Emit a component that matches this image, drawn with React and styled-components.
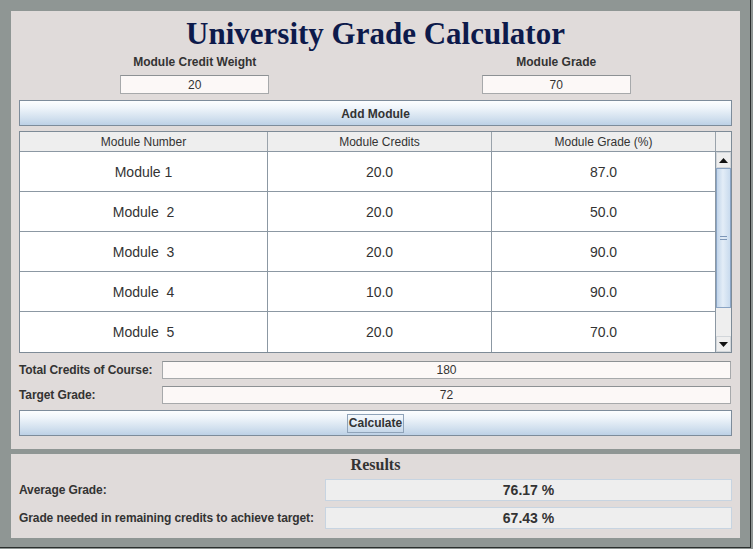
import React from 'react';
import styled, { createGlobalStyle } from 'styled-components';

const GlobalStyle = createGlobalStyle`
  html, body {
    margin: 0;
    padding: 0;
    background: #8f9694;
  }
  * {
    box-sizing: border-box;
  }
`;

const Frame = styled.div`
  width: 751px;
  height: 548px;
  background: #8f9694;
  border-right: 1px solid #2b2f2e;
  border-bottom: 1px solid #2b2f2e;
  padding: 11px 10px 0 11px;
  display: flex;
  flex-direction: column;
  gap: 5px;
  font-family: 'Liberation Sans', Arial, sans-serif;
  color: #333333;
`;

const Panel = styled.div`
  background: #e0dbda;
  padding: ${({ $pad }) => $pad};
  display: flex;
  flex-direction: column;
`;

const Title = styled.h1`
  margin: 0;
  padding-top: 5px;
  height: 41px;
  font-family: 'Liberation Serif', 'Times New Roman', serif;
  font-weight: bold;
  font-size: 31px;
  line-height: 36px;
  color: #0d1a4b;
  text-align: center;
`;

const EntryGrid = styled.div`
  display: grid;
  grid-template-columns: 1fr 1fr;
  margin: 0 -5px;
`;

const EntryColumn = styled.div`
  display: flex;
  flex-direction: column;
  align-items: center;
`;

const FieldLabel = styled.div`
  margin-top: 2px;
  font-size: 12px;
  line-height: 17px;
  font-weight: bold;
  color: #333;
`;

const TextBox = styled.div`
  width: ${({ $w }) => $w || '149px'};
  height: ${({ $h }) => $h || '19px'};
  margin-top: ${({ $mt }) => $mt || '0'};
  background: #fcf8f7;
  border: 1px solid #a7a9ab;
  border-top-color: #8d9194;
  font-size: 12px;
  line-height: ${({ $h }) => ($h ? `calc(${$h} - 1px)` : '18px')};
  text-align: center;
  color: #333;
`;

const Button = styled.div`
  height: 26px;
  margin-top: ${({ $mt }) => $mt};
  padding-top: 1px;
  display: flex;
  align-items: center;
  justify-content: center;
  border: 1px solid #7d8c9b;
  background: linear-gradient(#fdfeff 0%, #eef4fa 30%, #d3e1ef 70%, #bdd1e6 100%);
  font-size: 12px;
  font-weight: bold;
  color: #333;
`;

const FocusText = styled.span`
  padding: 1px 1px 2px;
  border: 1px solid #8fa3b9;
  line-height: 14px;
`;

const Table = styled.div`
  margin-top: 5px;
  border: 1px solid #7e8b97;
  display: flex;
  flex-direction: column;
  background: #ffffff;
`;

const HeaderRow = styled.div`
  display: grid;
  grid-template-columns: 248px 224px 224px 15px;
  height: 20px;
  border-bottom: 1px solid #8c98a3;
  background: #eeeeee;
`;

const HeaderCell = styled.div`
  border-right: ${({ $last }) => ($last ? 'none' : '1px solid #9aa3ab')};
  padding-top: 1px;
  font-size: 12px;
  line-height: 18px;
  text-align: center;
  color: #333;
`;

const TableBody = styled.div`
  display: flex;
`;

const Rows = styled.div`
  display: flex;
  flex-direction: column;
  width: 696px;
`;

const Row = styled.div`
  display: grid;
  grid-template-columns: 248px 224px 224px;
  height: 40px;
  border-bottom: ${({ $last }) => ($last ? 'none' : '1px solid #8c98a3')};
`;

const Cell = styled.div`
  border-right: 1px solid #8c98a3;
  padding-top: 1px;
  font-size: 14px;
  line-height: 38px;
  text-align: center;
  white-space: pre;
  color: #333;
`;

const ScrollBar = styled.div`
  width: 15px;
  display: flex;
  flex-direction: column;
  background: #eeeeee;
`;

const ArrowButton = styled.div`
  height: 16px;
  display: flex;
  align-items: center;
  justify-content: center;
  background: #eeeeee;
  border: 1px solid #d2d6da;
`;

const Thumb = styled.div`
  height: 140px;
  display: flex;
  align-items: center;
  justify-content: center;
  border: 1px solid #8aa4c4;
  background: linear-gradient(90deg, #c2d5ea 0%, #e3edf7 45%, #c9dbee 100%);
`;

const Grip = styled.div`
  width: 7px;
  height: 4px;
  border-top: 1px solid #7d97b8;
  border-bottom: 1px solid #7d97b8;
`;

const Track = styled.div`
  flex: 1;
  background: #eeeeee;
`;

const FormRow = styled.div`
  display: flex;
  align-items: center;
  margin-top: ${({ $mt }) => $mt};
`;

const FormLabel = styled.div`
  width: ${({ $w }) => $w};
  font-size: 12px;
  font-weight: bold;
  letter-spacing: -0.1px;
  color: #333;
`;

const ResultsTitle = styled.div`
  height: 22px;
  font-family: 'Liberation Serif', 'Times New Roman', serif;
  font-weight: bold;
  font-size: 16px;
  line-height: 22px;
  text-align: center;
  color: #333;
`;

const ResultBox = styled.div`
  flex: 1;
  height: 22px;
  background: #eeeeee;
  border: 1px solid #c7d4e1;
  font-size: 14px;
  font-weight: bold;
  line-height: 20px;
  text-align: center;
  color: #333;
`;

const Arrow = ({ up }) => (
  <svg width="9" height="5" viewBox="0 0 9 5">
    <path d={up ? 'M0 5 L4.5 0 L9 5 Z' : 'M0 0 L4.5 5 L9 0 Z'} fill="#111" />
  </svg>
);

const modules = [
  ['Module 1', '20.0', '87.0'],
  ['Module  2', '20.0', '50.0'],
  ['Module  3', '20.0', '90.0'],
  ['Module  4', '10.0', '90.0'],
  ['Module  5', '20.0', '70.0'],
];

const App = () => (
  <>
    <GlobalStyle />
    <Frame>
      <Panel $pad="0 8px 13px 8px">
        <Title>University Grade Calculator</Title>
        <EntryGrid>
          <EntryColumn>
            <FieldLabel>Module Credit Weight</FieldLabel>
            <TextBox $mt="4px">20</TextBox>
          </EntryColumn>
          <EntryColumn>
            <FieldLabel>Module Grade</FieldLabel>
            <TextBox $mt="4px">70</TextBox>
          </EntryColumn>
        </EntryGrid>
        <Button $mt="6px">Add Module</Button>
        <Table>
          <HeaderRow>
            <HeaderCell>Module Number</HeaderCell>
            <HeaderCell>Module Credits</HeaderCell>
            <HeaderCell>Module Grade (%)</HeaderCell>
            <HeaderCell $last />
          </HeaderRow>
          <TableBody>
            <Rows>
              {modules.map(([name, credits, grade], i) => (
                <Row key={name} $last={i === modules.length - 1}>
                  <Cell>{name}</Cell>
                  <Cell>{credits}</Cell>
                  <Cell>{grade}</Cell>
                </Row>
              ))}
            </Rows>
            <ScrollBar>
              <ArrowButton>
                <Arrow up />
              </ArrowButton>
              <Thumb>
                <Grip />
              </Thumb>
              <Track />
              <ArrowButton>
                <Arrow />
              </ArrowButton>
            </ScrollBar>
          </TableBody>
        </Table>
        <FormRow $mt="8px">
          <FormLabel $w="143px">Total Credits of Course:</FormLabel>
          <TextBox $w="569px" $h="18px">180</TextBox>
        </FormRow>
        <FormRow $mt="7px">
          <FormLabel $w="143px">Target Grade:</FormLabel>
          <TextBox $w="569px" $h="18px">72</TextBox>
        </FormRow>
        <Button $mt="6px">
          <FocusText>Calculate</FocusText>
        </Button>
      </Panel>
      <Panel $pad="0 8px 9px 8px">
        <ResultsTitle>Results</ResultsTitle>
        <FormRow $mt="3px">
          <FormLabel $w="306px">Average Grade:</FormLabel>
          <ResultBox>76.17 %</ResultBox>
        </FormRow>
        <FormRow $mt="6px">
          <FormLabel $w="306px">Grade needed in remaining credits to achieve target:</FormLabel>
          <ResultBox>67.43 %</ResultBox>
        </FormRow>
      </Panel>
    </Frame>
  </>
);

export default App;
